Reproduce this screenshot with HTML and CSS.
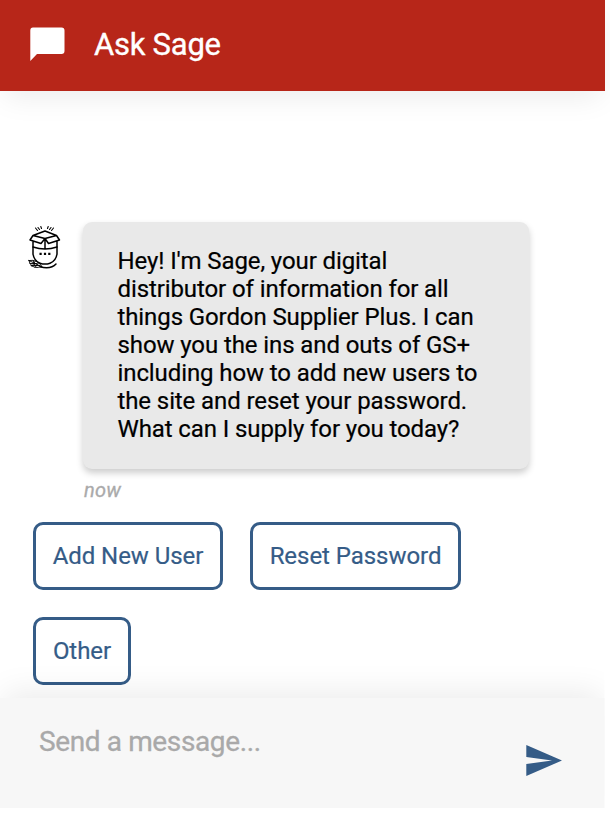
FILE: index.html
```html
<!DOCTYPE html>
<html lang="en">
<head>
<meta charset="utf-8">
<title>Ask Sage</title>
<link rel="stylesheet" href="styles.css">
</head>
<body>
<div class="chat">
  <header class="header">
    <svg class="header-icon" viewBox="0 0 35 35"><path d="M3 0.5H31.500Q34.500 .5 34.500 3.500V24Q34.500 27 31.500 27H7L.3 34V3.500Q.3 .5 3 .5Z" fill="#fff"/></svg>
    <h1 class="title">Ask Sage</h1>
  </header>
  <main class="messages">
    <div class="message">
      <svg class="avatar" viewBox="0 0 34 46" fill="none" stroke="#000" stroke-width="1.500" stroke-linejoin="round" stroke-linecap="round">
        <path d="M7.500 3L9.500 5.500M10 2.500L11.500 4.500M12.800 1.500L13.500 3.500M25.500 3L23.500 5.500M23 2.500L21.500 4.500M20.200 1.500L19.500 3.500" stroke-width="1.100"/>
        <path d="M5 10.500L17 6L28.500 10.500L17 13.500ZM5 10.500L2 15L13 18.500L17 13.500L20.500 18.500L31.500 15L28.500 10.500M17 13.500V23.500M5 16.500V22Q17 26 29 22V16.500"/>
        <path d="M5 22V29Q6 36 12 38.200Q17 40 22 38.200Q28 36 29 29V22"/>
        <path d="M11.500 28.800h2.200M15.900 28.800h2.200M20.200 28.800h2.200" stroke-width="2.200" stroke-linecap="butt"/>
        <path d="M1 35.500Q2 42 9 42.500L14 41.500Q9 34 1 35.500ZM1 35.500L14 42M4 41.500L7 36.500M7 42.500L10 38.500M2 38.500H9M5 35.500L7 40.500M3 40.500H12" stroke-width=".9"/>
        <path d="M12 41.800Q23 44.500 28 39" stroke-width="1.500"/>
      </svg>
      <div class="message-body">
        <p class="bubble">Hey! I'm Sage, your digital<br>distributor of information for all<br>things Gordon Supplier Plus. I can<br>show you the ins and outs of GS+<br>including how to add new users to<br>the site and reset your password.<br>What can I supply for you today?</p>
        <time class="time">now</time>
      </div>
    </div>
    <div class="replies">
      <button class="reply reply-add">Add New User</button>
      <button class="reply reply-reset">Reset Password</button>
      <button class="reply reply-other">Other</button>
    </div>
  </main>
  <footer class="composer">
    <span class="placeholder">Send a message...</span>
    <svg class="send" viewBox="0 0 36 31"><path d="M.3 0L36 15.500L.3 31V19L26 15.500L.3 12Z" fill="#355c87"/></svg>
  </footer>
</div>
</body>
</html>
```

FILE: styles.css
```css
* { box-sizing: border-box; }
body { margin: 0; background: #fff; font-family: Roboto, "Liberation Sans", sans-serif; overflow: hidden; }
.chat { width: 604.5px; height: 808px; display: flex; flex-direction: column; }
.header { height: 91px; flex: none; background: #b72619; display: flex; align-items: flex-start; padding: 27px 0 0 30px; box-shadow: 0 10px 30px -4px rgba(0,0,0,.08); }
.header-icon { width: 35px; height: 35px; margin-right: 29px; }
.title { margin: 0; font-size: 31px; line-height: 36px; font-weight: 400; letter-spacing: -.25px; color: #fff; -webkit-text-stroke: .35px #fff; }
.messages { flex: 1; min-height: 0; padding: 131px 0 0 28px; }
.message { display: flex; align-items: flex-start; }
.avatar { width: 34px; height: 46px; margin: 3px 21px 0 0; }
.message-body { display: flex; flex-direction: column; }
.bubble { margin: 0; width: 445.500px; height: 247px; padding: 25px 0 0 34.5px; border-radius: 9px; background: #e9e9e9; font-size: 24px; line-height: 28px; letter-spacing: -.1px; color: #000; white-space: nowrap; box-shadow: 0 4px 7px rgba(0,0,0,.2); -webkit-text-stroke: .2px #000; }
.time { margin: 9px 0 0 1px; font-size: 20px; line-height: 24px; letter-spacing: .2px; font-style: italic; color: #aaa; -webkit-text-stroke: .3px #aaa; }
.replies { display: flex; flex-wrap: wrap; gap: 27px; width: 500px; margin: 20px 0 0 5px; }
.reply { height: 68px; padding: 0; border: 3px solid #355c87; border-radius: 10px; background: transparent; font: 24px/28px Roboto, sans-serif; letter-spacing: -.05px; color: #355c87; white-space: nowrap; -webkit-text-stroke: .2px #355c87; }
.reply-add { width: 190px; }
.reply-reset { width: 211px; }
.reply-other { width: 98px; }
.composer { height: 110px; flex: none; background: #f7f7f7; display: flex; justify-content: space-between; align-items: flex-start; padding: 27px 42.5px 0 39px; box-shadow: 0 -10px 30px -4px rgba(0,0,0,.08); clip-path: inset(-50px 0 0 0); }
.placeholder { font-size: 28px; line-height: 33px; letter-spacing: -.38px; color: #a9a9a9; -webkit-text-stroke: .3px #a9a9a9; }
.send { width: 36px; height: 31px; margin-top: 20px; }
```
